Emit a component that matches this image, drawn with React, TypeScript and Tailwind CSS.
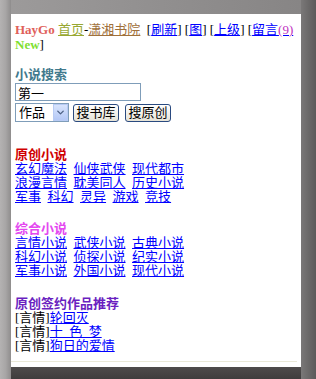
import { ChevronDown } from "lucide-react";

const original = [
  ["玄幻魔法", "仙侠武侠", "现代都市"],
  ["浪漫言情", "耽美同人", "历史小说"],
  ["军事", "科幻", "灵异", "游戏", "竞技"],
];

const mixed = [
  ["言情小说", "武侠小说", "古典小说"],
  ["科幻小说", "侦探小说", "纪实小说"],
  ["军事小说", "外国小说", "现代小说"],
];

const picks = ["轮回灭", "十 色 梦", "狗日的爱情"];

function Section({
  title,
  color,
  rows,
}: {
  title: string;
  color: string;
  rows: string[][];
}) {
  return (
    <div>
      <div className={`font-bold leading-[15px] ${color}`}>{title}</div>
      {rows.map((row, i) => (
        <div key={i} className="flex gap-x-[6.5px] leading-[14px]">
          {row.map((name) => (
            <a key={name} href="#" className="text-[#0000ff] underline">
              {name}
            </a>
          ))}
        </div>
      ))}
    </div>
  );
}

export default function App() {
  return (
    <div className="w-[316px] h-[379px] flex bg-[#5a5858] font-['Liberation_Serif','Noto_Sans_CJK_SC',serif] text-[13px] text-black">
      <div className="w-[11px] bg-gradient-to-r from-[#b4b2b2] via-[#a8a6a6] to-[#8f8d8d]" />
      <div className="w-[290px] flex flex-col">
        <div className="h-[14px] bg-gradient-to-r from-[#9c9a9a] to-[#878585]" />
        <div className="h-[353px] bg-white pl-[4px] pt-[8px] flex flex-col">
          <div className="leading-[15px]">
            <span className="font-bold text-[#e0605a]">HayGo</span>{" "}
            <a href="#" className="text-[#98a832] underline">首页</a>
            -
            <a href="#" className="text-[#a0703a] underline">潇湘书院</a>
            &nbsp;&nbsp;[<a href="#" className="text-[#0000ff] underline">刷新</a>]{" "}
            [<a href="#" className="text-[#0000ff] underline">图</a>]{" "}
            [<a href="#" className="text-[#0000ff] underline">上级</a>]{" "}
            [<a href="#" className="text-[#0000ff] underline">
              留言<span className="text-[#c030c0]">(9)</span>
            </a>
            <br />
            <span className="font-bold text-[#7ee030]">New</span>]
          </div>

          <div className="mt-[16px] font-bold leading-[14px] text-[#41798c]">小说搜索</div>
          <input
            defaultValue="第一"
            className="mt-[1px] w-[126px] h-[18px] border border-[#7f9db9] px-[2px] text-[13px] leading-[14px] outline-none"
          />
          <div className="mt-[2px] flex items-center gap-[4px]">
            <div className="w-[54px] h-[19px] border border-[#7f9db9] flex items-center justify-between pl-[3px]">
              <span className="leading-[14px]">作品</span>
              <span className="w-[15px] h-[17px] bg-gradient-to-b from-[#d8e4fc] to-[#b4c8f6] border border-[#b8cbf4] flex items-center justify-center">
                <ChevronDown size={11} strokeWidth={3} className="text-[#4d6185]" />
              </span>
            </div>
            <button className="w-[46px] h-[18px] rounded-[3px] border border-[#2a4a80] bg-gradient-to-b from-white to-[#e6e3d6] text-[13px] leading-[14px]">
              搜书库
            </button>
            <button className="ml-[2px] w-[46px] h-[18px] rounded-[3px] border border-[#2a4a80] bg-gradient-to-b from-white to-[#e6e3d6] text-[13px] leading-[14px]">
              搜原创
            </button>
          </div>

          <div className="mt-[25px]">
            <Section title="原创小说" color="text-[#d00000]" rows={original} />
          </div>
          <div className="mt-[17px]">
            <Section title="综合小说" color="text-[#e448f0]" rows={mixed} />
          </div>

          <div className="mt-[18px]">
            <div className="font-bold leading-[15px] text-[#6a1fc0]">原创签约作品推荐</div>
            {picks.map((p) => (
              <div key={p} className="leading-[14px] [word-spacing:3.25px]">
                [言情]
                <a href="#" className="text-[#0000ff] underline">
                  {p}
                </a>
              </div>
            ))}
          </div>

          <div className="mt-auto mb-[5px] w-[286px] -ml-[4px] h-px bg-[#eae9d8]" />
        </div>
        <div className="flex-1 bg-gradient-to-b from-[#4e4b4b] to-[#3f3d3d]" />
      </div>
      <div className="flex-1 bg-gradient-to-r from-[#7a7878] to-[#5c5a5a]" />
    </div>
  );
}
